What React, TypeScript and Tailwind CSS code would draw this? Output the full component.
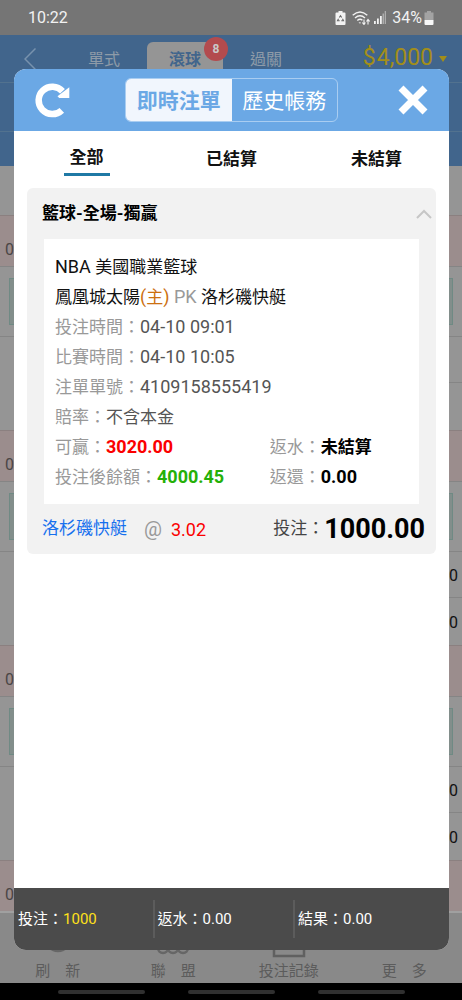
import React from 'react';

const groups = [
  { odds: ['', ''] },
  { odds: ['0', '0'] },
  { odds: ['0', '0'] },
];

function StatusBar() {
  return (
    <div className="flex h-[35px] items-center justify-between bg-[#757575] pl-7 pr-7 text-base text-[#f2f2f2]">
      <span>10:22</span>
      <div className="flex items-center">
        {/* battery saver */}
        <svg className="mr-[6px] h-[14px] w-[11px]" viewBox="0 0 11 14">
          <path d="M3.5 0h4v1.5h2q1 0 1 1V13q0 1-1 1h-8q-1 0-1-1V2.500q0-1 1-1h2z" fill="#f2f2f2" />
          <path d="M4.300 6.500L5.500 4.700L6.700 6.500M7.500 7.800L8.500 9.800H6.300M4.700 9.800H2.500L3.500 7.800" fill="none" stroke="#666" strokeWidth="1.100" />
        </svg>
        {/* wifi */}
        <svg className="mr-1 h-[14px] w-[18px]" viewBox="0 0 18 14" fill="none" stroke="#f2f2f2" strokeWidth="1.400">
          <path d="M.700 4.300Q8 -2.300 15.300 4.300M3 7Q8 2.500 13 7M5.300 9.500Q8 7.200 10.400 9.200" />
          <path d="M6.500 11.200L8 12.800L9 11.500z" fill="#f2f2f2" stroke="none" />
          <path d="M12 8.500v5M10.300 11.500l1.700 2l1.400-2M16 13.500v-5M14.500 10.500l1.500-2l1.600 2" strokeWidth="1.100" />
        </svg>
        {/* signal */}
        <svg className="mr-[6px] h-[13px] w-3" viewBox="0 0 12 13" fill="#f2f2f2">
          <path d="M0 10h1.800v3H0zM3 7.500h1.800V13H3zM6 5h1.800v8H6z" />
          <path d="M8.500 2.500h1.500V13H8.500zM10.700 0H12v13h-1.300z" opacity=".45" />
        </svg>
        <span className="mr-[2px]">34%</span>
        <svg className="h-[14px] w-[10px]" viewBox="0 0 10 14">
          <path d="M3 0h4v1.500h2.500V9h-9V1.500H3z" fill="#a3a3a3" />
          <path d="M.500 9h9v4q0 1-1 1h-7q-1 0-1-1z" fill="#f8f8f8" />
        </svg>
      </div>
    </div>
  );
}

function PageHeader() {
  return (
    <header className="bg-[#41658c]">
      <div className="flex h-12 border-b border-[#52728f]">
        <button aria-label="返回" className="flex w-[66px] items-center pl-6">
          <svg className="h-[22px] w-3" viewBox="0 0 12 22" fill="none" stroke="#7892ad" strokeWidth="1.500">
            <path d="M11.500 .500L1 11L11.500 21.500" />
          </svg>
        </button>
        <nav className="flex gap-[5px] pt-[7px] text-base text-[#8e9ba8]">
          <button className="w-[76px] pb-1">單式</button>
          <button className="relative w-[76px] rounded-t-md bg-[#959595] pb-1 font-bold text-[#41658c]">
            滾球
            <span className="absolute -right-[5px] -top-[5px] flex size-6 items-center justify-center rounded-full bg-[#b34b4e] text-xs text-[#c9c9c9]">
              8
            </span>
          </button>
          <button className="w-[76px] pb-1">過關</button>
        </nav>
        <div className="ml-auto flex items-center pr-[15px] text-[#a38e19]">
          <span className="mr-px text-[23px]">$</span>
          <span className="text-[23px]">4,000</span>
          <svg className="ml-[6px] h-[6px] w-2" viewBox="0 0 8 6" fill="#a38e19">
            <path d="M0 0h8L4 6z" />
          </svg>
        </div>
      </div>
      <div className="h-[49px] border-b border-[#52728f]" />
      <div className="h-[34px]" />
    </header>
  );
}

function GroupHeading() {
  return (
    <div className="flex h-[51px] items-center border-t border-[#8b8080] bg-[#9b8d8d] pl-[5px] pt-[18px] text-base text-[#4a4545]">
      0
    </div>
  );
}

function MatchList() {
  return (
    <main className="bg-[#959595]">
      <div className="h-[49px]" />
      {groups.map((group, i) => (
        <section key={i}>
          <GroupHeading />
          <div className="h-[71px] border-y border-[#858585] px-[9px] pb-[11px] pt-[11px]">
            <div className="h-full border border-[#6f8a84] bg-[#828e8b]" />
          </div>
          <div className="flex">
            <div className="flex-1" />
            <div className="w-1/2 text-base text-[#111]">
              <div className="flex h-[46px] items-center justify-end border-b border-[#858585] pr-1 pt-[3px]">{group.odds[0]}</div>
              <div className="flex h-[47px] items-center justify-end pr-1 pt-[3px]">{group.odds[1]}</div>
            </div>
          </div>
        </section>
      ))}
      <GroupHeading />
    </main>
  );
}

function Toolbar() {
  return (
    <>
      <nav className="grid h-[72px] flex-none grid-cols-4 border-t-2 border-[#a0a0a0] bg-[#898989] text-[15px] text-[#5c5c5c]">
        <button className="flex flex-col items-center justify-end pb-px">
          <svg className="h-9 w-9" viewBox="0 0 36 36" fill="none" stroke="#666" strokeWidth="2.500">
            <circle cx="18" cy="15" r="12" />
          </svg>
          <span className="whitespace-pre leading-[22px]">刷　新</span>
        </button>
        <button className="flex flex-col items-center justify-end pb-px">
          <svg className="h-9 w-9" viewBox="0 0 36 36" fill="none" stroke="#666" strokeWidth="2.500">
            <circle cx="8" cy="24" r="5" />
            <circle cx="18" cy="24" r="5" />
            <circle cx="28" cy="24" r="5" />
          </svg>
          <span className="whitespace-pre leading-[22px]">聯　盟</span>
        </button>
        <button className="flex flex-col items-center justify-end pb-px">
          <svg className="h-9 w-9" viewBox="0 0 36 36" fill="none" stroke="#606060" strokeWidth="2.500">
            <path d="M3 5h30v27H3z" />
          </svg>
          <span className="whitespace-pre leading-[22px]">投注記錄</span>
        </button>
        <button className="flex flex-col items-center justify-end pb-px">
          <span className="whitespace-pre leading-[22px]">更　多</span>
        </button>
      </nav>
      <div className="flex h-[17px] flex-none items-center justify-center gap-[43px] bg-black">
        <div className="h-1 w-[87px] rounded-full bg-[#303030]" />
        <div className="h-1 w-[87px] rounded-full bg-[#303030]" />
        <div className="h-1 w-[87px] rounded-full bg-[#303030]" />
      </div>
    </>
  );
}

function Field({ label, children }: { label: string; children: React.ReactNode }) {
  return (
    <p className="text-[#555]">
      <span className="text-[#999]">{label}：</span>
      {children}
    </p>
  );
}

function BetCard() {
  return (
    <article className="mx-[13px] rounded-md bg-[#f2f2f2] text-[17px]">
      <button className="flex h-[51px] w-full items-center justify-between pl-[15px] pr-1 font-bold text-black">
        籃球-全場-獨贏
        <svg className="h-[10px] w-4" viewBox="0 0 16 10" fill="none" stroke="#c6c6c6" strokeWidth="2">
          <path d="M1 9L8 2L15 9" />
        </svg>
      </button>
      <div className="mx-[17px] bg-white pb-3 pl-[11px] pt-[13px] leading-[30px]">
        <p className="text-[#111]">
          <span className="text-[18px]">NBA </span>美國職業籃球
        </p>
        <p className="text-[#111]">
          鳳凰城太陽
          <span className="text-[#cc7010]"><span className="text-[18px]">(</span>主<span className="text-[18px]">)</span></span>
          <span className="text-[18px] text-[#999]"> PK </span>
          洛杉磯快艇
        </p>
        <Field label="投注時間"><span className="text-[18px]">04-10 09:01</span></Field>
        <Field label="比賽時間"><span className="text-[18px]">04-10 10:05</span></Field>
        <Field label="注單單號"><span className="text-[18px]">4109158555419</span></Field>
        <Field label="賠率">不含本金</Field>
        <div className="grid grid-cols-[59%_41%]">
          <Field label="可贏"><b className="text-[18px] text-[#fb0000]">3020.00</b></Field>
          <Field label="返水"><b className="text-black">未結算</b></Field>
          <Field label="投注後餘額"><b className="text-[18px] text-[#25b008]">4000.45</b></Field>
          <Field label="返還"><b className="text-[18px] text-black">0.00</b></Field>
        </div>
      </div>
      <div className="flex h-[50px] items-center justify-between pl-[15px] pr-[11px]">
        <div className="flex items-center">
          <span className="text-[#1670ee]">洛杉磯快艇</span>
          <span className="ml-[17px] text-xl text-[#999]">@</span>
          <span className="ml-[9px] text-[18px] text-[#fb0000]">3.02</span>
        </div>
        <div className="flex items-center text-[#444]">
          投注：
          <b className="text-[27px] text-black">1000.00</b>
        </div>
      </div>
    </article>
  );
}

function BetModal() {
  return (
    <div role="dialog" aria-label="即時注單" className="absolute bottom-[50px] left-[14px] right-[13px] top-[69px] flex flex-col overflow-hidden rounded-xl bg-white">
      <div className="flex h-[62px] flex-none items-center justify-between bg-[#6ba8e5] px-[21px]">
        <button aria-label="刷新">
          <svg className="size-9" viewBox="0 0 36 36">
            <path d="M27.500 9.200A13.700 13.700 0 1 0 26.800 28.300" fill="none" stroke="#fff" strokeWidth="6.500" />
            <path d="M34.300 5.200V16H24.200L22.500 14.200z" fill="#fff" />
          </svg>
        </button>
        <div className="flex h-11 w-[213px] overflow-hidden rounded-md border border-[#a9cdf1] text-[21px]">
          <button className="flex-1 bg-[#f1f6fd] pt-[3px] font-bold text-[#6ba8e5]">即時注單</button>
          <button className="flex-1 pt-[3px] text-white">歷史帳務</button>
        </div>
        <button aria-label="關閉" className="flex w-9 justify-end">
          <svg className="size-[30px]" viewBox="0 0 30 30" stroke="#fff" strokeWidth="7">
            <path d="M3 3L27 27M27 3L3 27" />
          </svg>
        </button>
      </div>

      <div className="grid h-[57px] flex-none grid-cols-3 text-[17px] font-bold text-[#111]">
        <button className="flex flex-col items-center pt-[14px]">
          <span className="border-b-[3px] border-[#1f79a5] px-[6px] pb-1 leading-6">全部</span>
        </button>
        <button>已結算</button>
        <button>未結算</button>
      </div>

      <BetCard />

      <footer className="mt-auto flex h-[62px] flex-none items-center bg-[#4b4b4b] text-[15px] leading-[38px] text-white">
        <div className="w-[32.3%] border-r-2 border-[#5c5c5c] pl-1">
          投注：<span className="text-[#ffe01a]">1000</span>
        </div>
        <div className="w-[32.3%] border-r-2 border-[#5c5c5c] pl-[3px]">返水：0.00</div>
        <div className="pl-[3px]">結果：0.00</div>
      </footer>
    </div>
  );
}

export default function App() {
  return (
    <div className="relative flex min-h-screen flex-col bg-[#959595] font-['Roboto','Noto_Sans_CJK_TC',sans-serif]">
      <StatusBar />
      <PageHeader />
      <MatchList />
      <Toolbar />
      <BetModal />
    </div>
  );
}
